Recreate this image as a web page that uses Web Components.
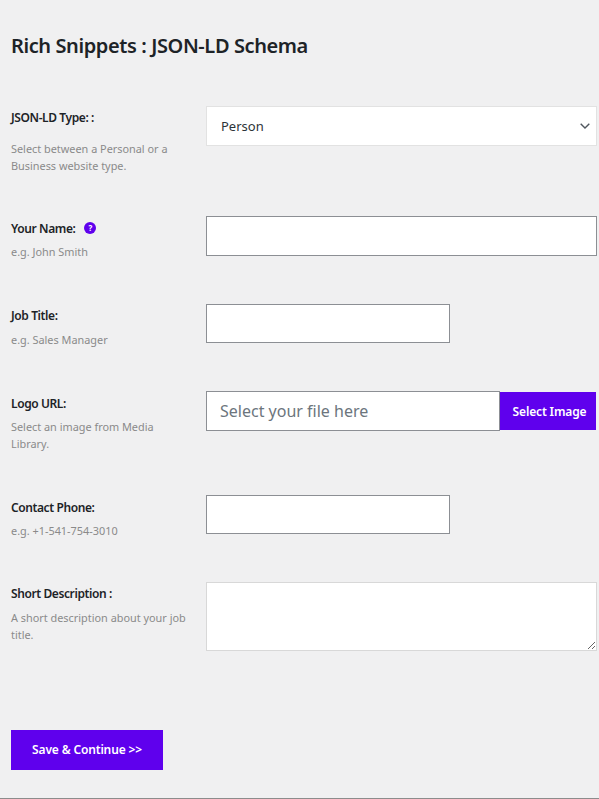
<!DOCTYPE html>
<html>
<head>
<meta charset="utf-8">
<style>
  html, body { margin: 0; height: 100%; }
  body { background: #f0f0f1; font-family: "Noto Sans", "Open Sans", sans-serif; }
</style>
</head>
<body>
<schema-form>
  <form-row label="JSON-LD Type: :" height="110" style="--label-top: 2px; --hint-gap: 13px">
    <span slot="hint">Select between a Personal or a Business website type.</span>
    <select-field value="Person"></select-field>
  </form-row>
  <form-row label="Your Name:" help height="88">
    <span slot="hint">e.g. John Smith</span>
    <text-field></text-field>
  </form-row>
  <form-row label="Job Title:" height="87" style="--label-top: 2px; --hint-gap: 6px">
    <span slot="hint">e.g. Sales Manager</span>
    <text-field short></text-field>
  </form-row>
  <form-row label="Logo URL:" height="104">
    <span slot="hint">Select an image from Media Library.</span>
    <file-field placeholder="Select your file here" action="Select Image"></file-field>
  </form-row>
  <form-row label="Contact Phone:" height="87">
    <span slot="hint">e.g. +1-541-754-3010</span>
    <text-field short></text-field>
  </form-row>
  <form-row label="Short Description :" height="148" style="--label-top: 2px; --hint-gap: 6px">
    <span slot="hint">A short description about your job title.</span>
    <area-field></area-field>
  </form-row>
</schema-form>

<script>
const formTemplate = document.createElement('template');
formTemplate.innerHTML = `
  <style>
    :host {
      display: flex;
      flex-direction: column;
      box-sizing: border-box;
      height: 799px;
      padding: 32px 2px 0 11px;
      border-bottom: 1px solid #8c8c8c;
      color: #1d2327;
    }
    h1 {
      margin: 0 0 47px;
      height: 27px;
      font-size: 20px;
      line-height: 27px;
      font-weight: 600;
      letter-spacing: -0.4px;
    }
    button {
      align-self: flex-start;
      width: 152px;
      height: 40px;
      padding: 0 0 2px;
      border: 0;
      background: #5f00ed;
      color: #fff;
      font: 600 12px "Noto Sans", sans-serif;
      letter-spacing: -0.15px;
    }
  </style>
  <h1>Rich Snippets : JSON-LD Schema</h1>
  <slot></slot>
  <button type="button">Save &amp; Continue &gt;&gt;</button>
`;

class SchemaForm extends HTMLElement {
  constructor() {
    super();
    this.attachShadow({ mode: 'open' });
    this.shadowRoot.appendChild(formTemplate.content.cloneNode(true));
  }
}
customElements.define('schema-form', SchemaForm);

const rowTemplate = document.createElement('template');
rowTemplate.innerHTML = `
  <style>
    :host {
      display: grid;
      grid-template-columns: 195px 1fr;
      box-sizing: border-box;
    }
    .text { padding-right: 15px; }
    .label {
      display: flex;
      align-items: center;
      gap: 9px;
      height: 20px;
      margin-top: var(--label-top, 3px);
      font-size: 12px;
      line-height: 20px;
      font-weight: 600;
      letter-spacing: -0.4px;
    }
    .help {
      display: none;
      width: 12px;
      height: 12px;
      margin-top: -2px;
      border-radius: 50%;
      background: #5f00ed;
      color: #fff;
      font-size: 8px;
      line-height: 12px;
      font-weight: 700;
      text-align: center;
      letter-spacing: 0;
    }
    :host([help]) .help { display: block; }
    .hint {
      margin-top: var(--hint-gap, 5px);
      font-size: 10.88px;
      line-height: 16.5px;
      color: #8a8a8a;
    }
  </style>
  <div class="text">
    <div class="label"><span id="label"></span><span class="help">?</span></div>
    <div class="hint"><slot name="hint"></slot></div>
  </div>
  <div class="control"><slot></slot></div>
`;

class FormRow extends HTMLElement {
  constructor() {
    super();
    this.attachShadow({ mode: 'open' });
    this.shadowRoot.appendChild(rowTemplate.content.cloneNode(true));
  }

  connectedCallback() {
    this.shadowRoot.getElementById('label').textContent = this.getAttribute('label');
    this.style.height = this.getAttribute('height') + 'px';
  }
}
customElements.define('form-row', FormRow);

const selectTemplate = document.createElement('template');
selectTemplate.innerHTML = `
  <style>
    :host {
      display: flex;
      align-items: center;
      justify-content: space-between;
      box-sizing: border-box;
      height: 40px;
      padding: 0 6px 0 14px;
      background: #fff;
      border: 1px solid #e2e2e2;
      font-size: 13px;
      color: #2c3338;
    }
    svg { display: block; }
  </style>
  <span id="value"></span>
  <svg width="10" height="6" viewBox="0 0 10 6" fill="none" stroke="#50575e" stroke-width="1.4">
    <path d="M.7.8 5 5 9.3.8"/>
  </svg>
`;

class SelectField extends HTMLElement {
  constructor() {
    super();
    this.attachShadow({ mode: 'open' });
    this.shadowRoot.appendChild(selectTemplate.content.cloneNode(true));
  }

  connectedCallback() {
    this.shadowRoot.getElementById('value').textContent = this.getAttribute('value');
  }
}
customElements.define('select-field', SelectField);

const textTemplate = document.createElement('template');
textTemplate.innerHTML = `
  <style>
    :host {
      display: block;
      box-sizing: border-box;
      height: 40px;
      background: #fff;
      border: 1px solid #8c8f94;
    }
    :host([short]) { width: 244px; height: 39px; }
    input {
      display: block;
      width: 100%;
      height: 100%;
      box-sizing: border-box;
      border: 0;
      background: none;
    }
  </style>
  <input type="text">
`;

class TextField extends HTMLElement {
  constructor() {
    super();
    this.attachShadow({ mode: 'open' });
    this.shadowRoot.appendChild(textTemplate.content.cloneNode(true));
  }
}
customElements.define('text-field', TextField);

const fileTemplate = document.createElement('template');
fileTemplate.innerHTML = `
  <style>
    :host {
      display: flex;
      align-items: center;
      width: 390px;
      height: 40px;
    }
    .box {
      flex: none;
      box-sizing: border-box;
      width: 294px;
      height: 40px;
      padding-left: 13px;
      background: #fff;
      border: 1px solid #8c8f94;
      color: #6c757d;
      font-size: 16px;
      line-height: 38px;
    }
    button {
      flex: 1;
      height: 38px;
      padding: 0 0 0 3px;
      border: 0;
      background: #5f00ed;
      color: #fff;
      font: 600 12px "Noto Sans", sans-serif;
      letter-spacing: -0.15px;
    }
  </style>
  <div class="box" id="box"></div>
  <button type="button" id="action"></button>
`;

class FileField extends HTMLElement {
  constructor() {
    super();
    this.attachShadow({ mode: 'open' });
    this.shadowRoot.appendChild(fileTemplate.content.cloneNode(true));
  }

  connectedCallback() {
    this.shadowRoot.getElementById('box').textContent = this.getAttribute('placeholder');
    this.shadowRoot.getElementById('action').textContent = this.getAttribute('action');
  }
}
customElements.define('file-field', FileField);

const areaTemplate = document.createElement('template');
areaTemplate.innerHTML = `
  <style>
    :host { display: block; height: 69px; }
    textarea {
      display: block;
      box-sizing: border-box;
      width: 100%;
      height: 69px;
      margin: 0;
      background: #fff;
      border: 1px solid #d8d8d8;
      outline: 0;
    }
  </style>
  <textarea></textarea>
`;

class AreaField extends HTMLElement {
  constructor() {
    super();
    this.attachShadow({ mode: 'open' });
    this.shadowRoot.appendChild(areaTemplate.content.cloneNode(true));
  }
}
customElements.define('area-field', AreaField);
</script>
</body>
</html>
